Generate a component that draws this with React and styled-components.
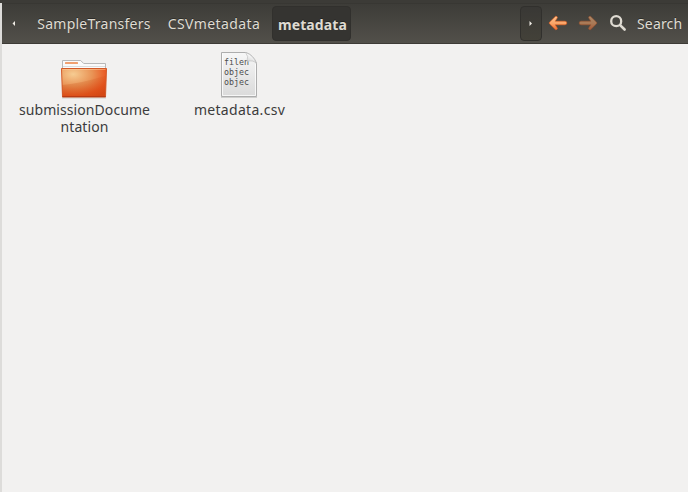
import React from 'react';
import styled, { createGlobalStyle } from 'styled-components';

const GlobalStyle = createGlobalStyle`
  * { box-sizing: border-box; }
  body { margin: 0; overflow: hidden; background: #f2f1f0; }
`;

const Window = styled.main`
  display: flex;
  flex-direction: column;
  width: 688px;
  height: 492px;
  background: #3c3b37;
  padding-top: 3px;
  font-family: 'Noto Sans', sans-serif;
  font-size: 14px;
`;

const Body = styled.div`
  display: flex;
  flex-direction: column;
  flex: 1;
  background: #f2f1f0;
  border-left: 2px solid #dddcda;
`;

const Toolbar = styled.header`
  display: flex;
  align-items: flex-start;
  height: 41px;
  padding-top: 2px;
  background: linear-gradient(#3d3c38, #52504a);
  border-top: 1px solid #383733;
  border-bottom: 1px solid #3d3b36;
  color: #dfdbd2;
`;

const PathButton = styled.div`
  display: flex;
  align-items: center;
  justify-content: center;
  flex: none;
  height: 35px;
  width: ${(p) => p.$width}px;
  margin-right: ${(p) => p.$gap || 0}px;
  padding-top: ${(p) => (p.$bold ? 2 : 0)}px;
  padding-left: ${(p) => (p.$bold ? 2 : 0)}px;
  border: 1px solid ${(p) => (p.$framed ? '#31302d' : 'transparent')};
  border-radius: 4px;
  background: ${(p) => (p.$framed ? p.$fill : 'transparent')};
`;

const Label = styled.span`
  white-space: nowrap;
  line-height: 18px;
  font-weight: ${(p) => (p.$bold ? 700 : 400)};
  letter-spacing: ${(p) => p.$spacing || 0}px;
  text-shadow: 0 -1px 0 rgba(0, 0, 0, 0.35);
`;

const Spacer = styled.div`
  flex: 1;
`;

const Tool = styled.div`
  display: flex;
  align-items: center;
  justify-content: center;
  width: 30px;
  height: 34px;
  flex: none;
  opacity: ${(p) => (p.$disabled ? 0.55 : 1)};
`;

const SearchLabel = styled.div`
  display: flex;
  align-items: center;
  height: 35px;
  width: 55px;
  padding-left: 4px;
`;

const Files = styled.section`
  display: flex;
  padding-top: 7px;
  padding-left: 4px;
`;

const FileItem = styled.article`
  display: flex;
  flex-direction: column;
  align-items: center;
  width: 155px;
  color: #3c3c3c;
`;

const FileIcon = styled.svg`
  display: block;
  width: 48px;
  height: 50px;
`;

const FileName = styled.div`
  line-height: 17px;
  text-align: center;
  white-space: pre;
  padding-left: 2px;
  letter-spacing: ${(p) => p.$spacing || 0}px;
`;

const Snippet = styled.text`
  font-family: 'DejaVu Sans Mono', monospace;
  font-size: 8.3px;
  fill: #4c4c4c;
`;

const Triangle = ({ right }) => (
  <svg width="4" height="5" viewBox="0 0 4 5">
    <path d={right ? 'M.5 0v5L3 2.5z' : 'M3 0v5L.5 2.5z'} fill="#efece5" />
  </svg>
);

const Arrow = ({ right }) => (
  <svg width="20" height="16" viewBox="0 0 20 16">
    <defs>
      <linearGradient id={right ? 'arrowNext' : 'arrowBack'} x1="0" y1="0" x2="0" y2="1">
        <stop offset="0" stopColor="#ffc28c" />
        <stop offset="0.55" stopColor="#fba366" />
        <stop offset="1" stopColor="#f06a30" />
      </linearGradient>
    </defs>
    <g transform={right ? 'matrix(-1 0 0 1 20 0)' : undefined}>
      <path
        d="M7.4 1.4Q9.3 1 9.4 2.7L7.200 6.200H17Q18.800 6.400 18.800 8T17 9.800H7.200l2.200 3.500Q9.300 15 7.400 14.600L1.500 8.800Q.9 8 1.500 7.200z"
        fill={`url(#${right ? 'arrowNext' : 'arrowBack'})`}
        stroke="#e8601f"
        strokeWidth="0.6"
      />
    </g>
  </svg>
);

const SearchGlyph = () => (
  <svg width="18" height="18" viewBox="0 0 18 18" fill="none" stroke="#dfdbd2">
    <circle cx="7.2" cy="7.2" r="5" strokeWidth="2.3" />
    <path d="M11.1 11.1l4.5 4.4" strokeWidth="2.6" strokeLinecap="round" />
  </svg>
);

const Folder = () => (
  <FileIcon viewBox="0 0 48 50">
    <defs>
      <radialGradient id="folderFill" cx="0.26" cy="0.2" r="0.95">
        <stop offset="0" stopColor="#f6cc92" />
        <stop offset="0.45" stopColor="#e99355" />
        <stop offset="0.8" stopColor="#e9541f" />
        <stop offset="1" stopColor="#dc4616" />
      </radialGradient>
      <linearGradient id="folderShade" x1="0" y1="0" x2="0" y2="1">
        <stop offset="0" stopColor="#c84a10" stopOpacity="0.12" />
        <stop offset="1" stopColor="#c84a10" stopOpacity="0.4" />
      </linearGradient>
    </defs>
    <path d="M2 46.7h44" stroke="#000" strokeOpacity="0.16" strokeWidth="1.5" />
    <path d="M2.500 45V9.500h18.200l3 3h21.800V45z" fill="#fafafa" stroke="#b8b8b8" />
    <path d="M3 15.5h42" stroke="#dcdcdc" />
    <rect x="5" y="11" width="13" height="2" rx="0.5" fill="#f0a070" />
    <path d="M1.500 17.500h45l-1 28.500h-43z" fill="url(#folderFill)" stroke="#d45a28" />
    <path d="M2 34Q23 32 46 24.500L45 46H3z" fill="url(#folderShade)" />
    <path d="M2.500 18.500h43" stroke="#ffd0a0" strokeOpacity="0.5" />
    <path d="M2.500 45.500h43" stroke="#b93a14" />
  </FileIcon>
);

const TextDocument = () => (
  <FileIcon viewBox="0 0 48 50">
    <defs>
      <linearGradient id="paperFill" x1="0" y1="0" x2="0" y2="1">
        <stop offset="0" stopColor="#f7f7f7" />
        <stop offset="1" stopColor="#dadada" />
      </linearGradient>
      <linearGradient id="paperFold" x1="0.6" y1="0.2" x2="0.3" y2="0.9">
        <stop offset="0" stopColor="#ffffff" />
        <stop offset="1" stopColor="#d0d0d0" />
      </linearGradient>
    </defs>
    <path d="M6 46.500h36" stroke="#000" strokeOpacity="0.14" />
    <path d="M6.500 1.500H31Q38 4 41.500 12V45.500H6.500z" fill="url(#paperFill)" stroke="#adadad" />
    <path d="M7.500 2.500v42h33V13" fill="none" stroke="#fff" strokeOpacity="0.75" />
    <Snippet x="9" y="14">filen</Snippet>
    <Snippet x="9" y="24">objec</Snippet>
    <Snippet x="9" y="34">objec</Snippet>
    <path d="M30.500 1.500Q34 5 32 10.500Q38 8.500 41.500 12.500Q38.500 4 30.500 1.500z" fill="url(#paperFold)" fillOpacity="0.85" stroke="#c0c0c0" strokeWidth="0.7" />
  </FileIcon>
);

export default function App() {
  return (
    <>
      <GlobalStyle />
      <Window>
        <Body>
          <Toolbar>
            <PathButton $width={24}><Triangle /></PathButton>
            <PathButton $width={136}><Label $spacing={0.25}>SampleTransfers</Label></PathButton>
            <PathButton $width={104} $gap={6}><Label $spacing={0.4}>CSVmetadata</Label></PathButton>
            <PathButton $width={79} $bold $framed $fill="#353431"><Label $bold $spacing={0.12}>metadata</Label></PathButton>
            <Spacer />
            <PathButton $width={22} $gap={1} $framed $fill="linear-gradient(#393835, #434139)"><Triangle right /></PathButton>
            <Tool><Arrow /></Tool>
            <Tool $disabled><Arrow right /></Tool>
            <Tool><SearchGlyph /></Tool>
            <SearchLabel><Label $spacing={0.15}>Search</Label></SearchLabel>
          </Toolbar>
          <Files>
            <FileItem>
              <Folder />
              <FileName $spacing={0.08}>{'submissionDocume\nntation'}</FileName>
            </FileItem>
            <FileItem>
              <TextDocument />
              <FileName $spacing={0.3}>metadata.csv</FileName>
            </FileItem>
          </Files>
        </Body>
      </Window>
    </>
  );
}
